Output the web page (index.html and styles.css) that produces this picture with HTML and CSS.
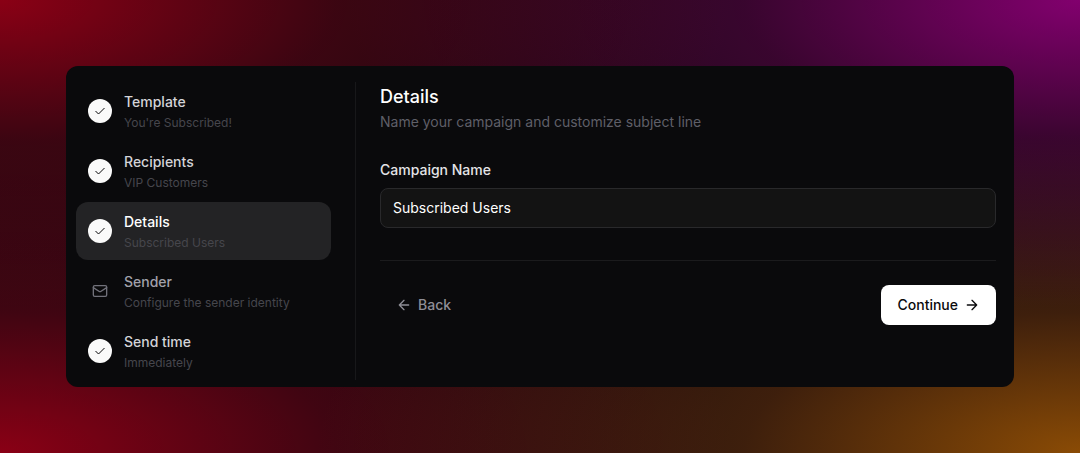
FILE: index.html
```html
<!DOCTYPE html>
<html lang="en">
<head>
  <meta charset="UTF-8" />
  <meta name="viewport" content="width=device-width, initial-scale=1.0"/>
  <title>New Campaign</title>
  <link rel="stylesheet" href="styles.css">
</head>
<body>
  <main class="card">
    <nav class="steps" aria-label="Campaign steps">
      <a href="#template" class="step">
        <span class="step-icon done">
          <svg width="12" height="12" viewBox="0 0 12 12"><path d="M1.5 6 L4.5 9 L10.5 3"/></svg>
        </span>
        <span class="step-text">
          <span class="step-title">Template</span>
          <span class="step-info">You're Subscribed!</span>
        </span>
      </a>
      <a href="#recipients" class="step">
        <span class="step-icon done">
          <svg width="12" height="12" viewBox="0 0 12 12"><path d="M1.5 6 L4.5 9 L10.5 3"/></svg>
        </span>
        <span class="step-text">
          <span class="step-title">Recipients</span>
          <span class="step-info">VIP Customers</span>
        </span>
      </a>
      <a href="#details" class="step active" aria-current="step">
        <span class="step-icon done">
          <svg width="12" height="12" viewBox="0 0 12 12"><path d="M1.5 6 L4.5 9 L10.5 3"/></svg>
        </span>
        <span class="step-text">
          <span class="step-title">Details</span>
          <span class="step-info">Subscribed Users</span>
        </span>
      </a>
      <a href="#sender" class="step pending">
        <span class="step-icon">
          <svg class="icon" width="16" height="16" viewBox="0 0 24 24"><rect x="2" y="4" width="20" height="16" rx="2"/><path d="m22 7-8.97 5.7a1.94 1.94 0 0 1-2.06 0L2 7"/></svg>
        </span>
        <span class="step-text">
          <span class="step-title">Sender</span>
          <span class="step-info">Configure the sender identity</span>
        </span>
      </a>
      <a href="#send-time" class="step">
        <span class="step-icon done">
          <svg width="12" height="12" viewBox="0 0 12 12"><path d="M1.5 6 L4.5 9 L10.5 3"/></svg>
        </span>
        <span class="step-text">
          <span class="step-title">Send time</span>
          <span class="step-info">Immediately</span>
        </span>
      </a>
    </nav>

    <form class="panel">
      <h1>Details</h1>
      <p class="subtitle">Name your campaign and customize subject line</p>

      <label for="campaign-name">Campaign Name</label>
      <input type="text" id="campaign-name" value="Subscribed Users">

      <div class="actions">
        <button type="button" class="btn back">
          <svg class="icon" width="16" height="16" viewBox="0 0 24 24"><path d="m12 19-7-7 7-7M19 12H5"/></svg>
          Back
        </button>
        <button type="submit" class="btn continue">
          Continue
          <svg class="icon" width="16" height="16" viewBox="0 0 24 24"><path d="M5 12h14M12 5l7 7-7 7"/></svg>
        </button>
      </div>
    </form>
  </main>
</body>
</html>
```

FILE: styles.css
```css
* {
  box-sizing: border-box;
}
body {
  margin: 0;
  min-height: 100vh;
  padding: 66px;
  font-family: Inter, sans-serif;
  font-size: 14px;
  line-height: 20px;
  color: #fff;
  background:
    radial-gradient(ellipse at 0 0, #8a0015, rgba(138, 0, 21, 0.32) 22%, transparent 48%),
    radial-gradient(ellipse at 100% 0, #82006e, rgba(130, 0, 110, 0.32) 22%, transparent 48%),
    radial-gradient(ellipse at 100% 100%, #8a4b05, rgba(138, 75, 5, 0.34) 22%, transparent 50%),
    radial-gradient(ellipse at 0 100%, #8a0015, rgba(138, 0, 21, 0.36) 22%, transparent 48%),
    #160810;
}
.card {
  display: flex;
  padding: 16px 18px 7px 10px;
  background: #0a0a0c;
  border-radius: 12px;
}
.steps {
  display: flex;
  flex-direction: column;
  gap: 2px;
  width: 280px;
  padding-right: 24px;
  border-right: 1px solid #18181a;
}
.step {
  display: flex;
  align-items: center;
  gap: 12px;
  height: 58px;
  padding: 0 12px;
  border-radius: 12px;
  color: #d4d4d8;
  text-decoration: none;
}
.step.active {
  background: #232325;
  color: #fff;
}
.step.pending {
  color: #a1a1aa;
}
.step-icon {
  display: flex;
  align-items: center;
  justify-content: center;
  width: 24px;
  height: 24px;
  border-radius: 50%;
  color: #71717a;
}
.step-icon.done {
  background: #fafafa;
  color: #0a0a0c;
}
.step-text {
  display: flex;
  flex-direction: column;
  gap: 1px;
  padding-top: 3px;
}
.step-title {
  font-weight: 500;
}
.step-info {
  font-size: 12px;
  color: #46464c;
}
svg {
  fill: none;
  stroke: currentColor;
  stroke-width: 1;
}
.icon {
  stroke-width: 2;
  stroke-linecap: round;
  stroke-linejoin: round;
}
.panel {
  flex: 1;
  padding: 1px 0 0 24px;
}
h1 {
  margin: 0 0 1px;
  font-size: 18px;
  line-height: 28px;
  font-weight: 500;
}
.subtitle {
  margin: 0 0 28px;
  color: #5f5f68;
}
label {
  display: block;
  margin-bottom: 8px;
  font-weight: 500;
  color: #e4e4e7;
}
input {
  display: block;
  width: 100%;
  height: 40px;
  padding: 0 12px 2px;
  font: inherit;
  color: #fff;
  background: #131313;
  border: 1px solid #29292b;
  border-radius: 8px;
}
.actions {
  display: flex;
  justify-content: space-between;
  margin-top: 32px;
  padding-top: 24px;
  border-top: 1px solid #1b1b1d;
}
.btn {
  display: flex;
  align-items: center;
  gap: 6px;
  height: 40px;
  padding: 0 16px;
  font: inherit;
  font-weight: 500;
  border: 0;
  border-radius: 8px;
  cursor: pointer;
}
.back {
  background: transparent;
  color: #8e8e96;
}
.continue {
  background: #fff;
  color: #0a0a0c;
}
```
